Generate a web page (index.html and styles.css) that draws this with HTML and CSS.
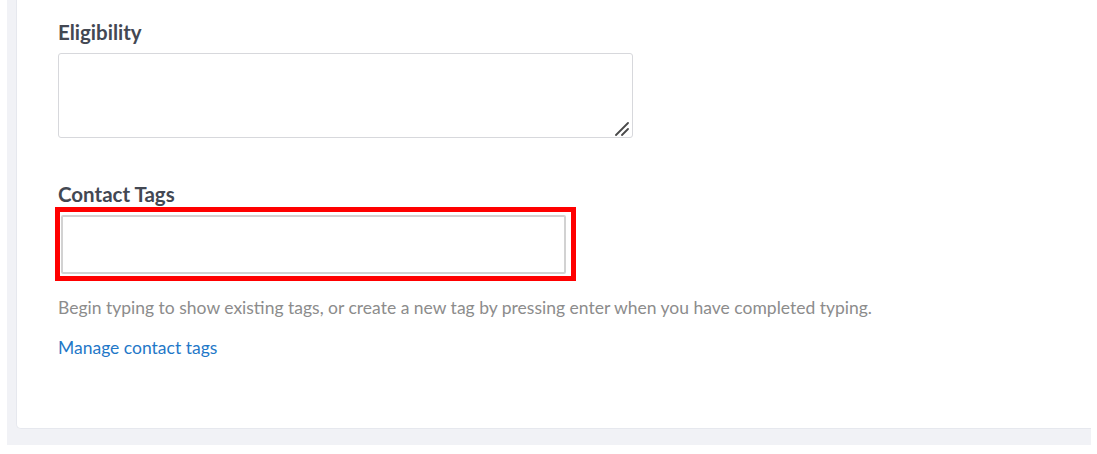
FILE: index.html
```html
<!DOCTYPE html>
<html lang="en">
    <head>
        <meta charset="utf-8">
        <link rel="stylesheet" href="styles.css">
    </head>
    <body>
        <div class="page">
            <div class="card">
                <div class="field">
                    <label class="label" for="eligibility">Eligibility</label>
                    <div class="area">
                        <textarea id="eligibility"></textarea>
                        <svg class="grip" width="16" height="16" viewBox="0 0 16 16">
                            <path d="M2 15 L14 3 M8 15 L14 9" stroke="#4a4a4a" stroke-width="1.8" stroke-linecap="round"/>
                        </svg>
                    </div>
                </div>
                <div class="field tags">
                    <label class="label" for="tags">Contact Tags</label>
                    <div class="mark">
                        <input id="tags" type="text">
                    </div>
                    <p class="help">Begin typing to show existing tags, or create a new tag by pressing enter when you have completed typing.</p>
                    <a class="link" href="#">Manage contact tags</a>
                </div>
            </div>
        </div>
    </body>
</html>
```

FILE: styles.css
```css
*{
    margin: 0;
    padding: 0;
    box-sizing: border-box;
}

body{
    background: #fff;
    font-family: Lato, "Open Sans", sans-serif;
    width: 1097px;
    height: 454px;
    overflow: hidden;
}

.page{
    margin-left: 7px;
    width: 1084px;
    height: 445px;
    background: #f1f2f6;
    padding-left: 9px;
}

.card{
    background: #fff;
    height: 429px;
    border: 1px solid #e6e8ee;
    border-top: 0;
    border-right: 0;
    border-radius: 0 0 0 5px;
    padding: 20px 0 0 41px;
}

.label{
    display: block;
    font-size: 20.5px;
    font-weight: bold;
    color: #434853;
    line-height: 24px;
}

.area{
    position: relative;
    width: 575px;
    margin-top: 9px;
}

.area textarea{
    display: block;
    width: 575px;
    height: 85px;
    border: 1px solid #d7d8dc;
    border-radius: 3px;
    resize: none;
    outline: none;
}

.grip{
    position: absolute;
    right: 3px;
    bottom: 2px;
}

.tags{
    margin-top: 44px;
}

.mark{
    width: 521px;
    height: 74px;
    margin: 1px 0 0 -3px;
    border: 5px solid #ff0000;
    padding: 3px 5px 2px 1px;
}

.mark input{
    display: block;
    width: 100%;
    height: 100%;
    border: 2px solid #d2d2d2;
    border-radius: 2px;
    outline: none;
}

.help{
    margin-top: 16px;
    font-size: 17.5px;
    color: #8c8c8c;
    line-height: 22px;
}

.link{
    display: inline-block;
    margin-top: 18px;
    font-size: 17.5px;
    color: #1f78c8;
    text-decoration: none;
    line-height: 22px;
}
```
